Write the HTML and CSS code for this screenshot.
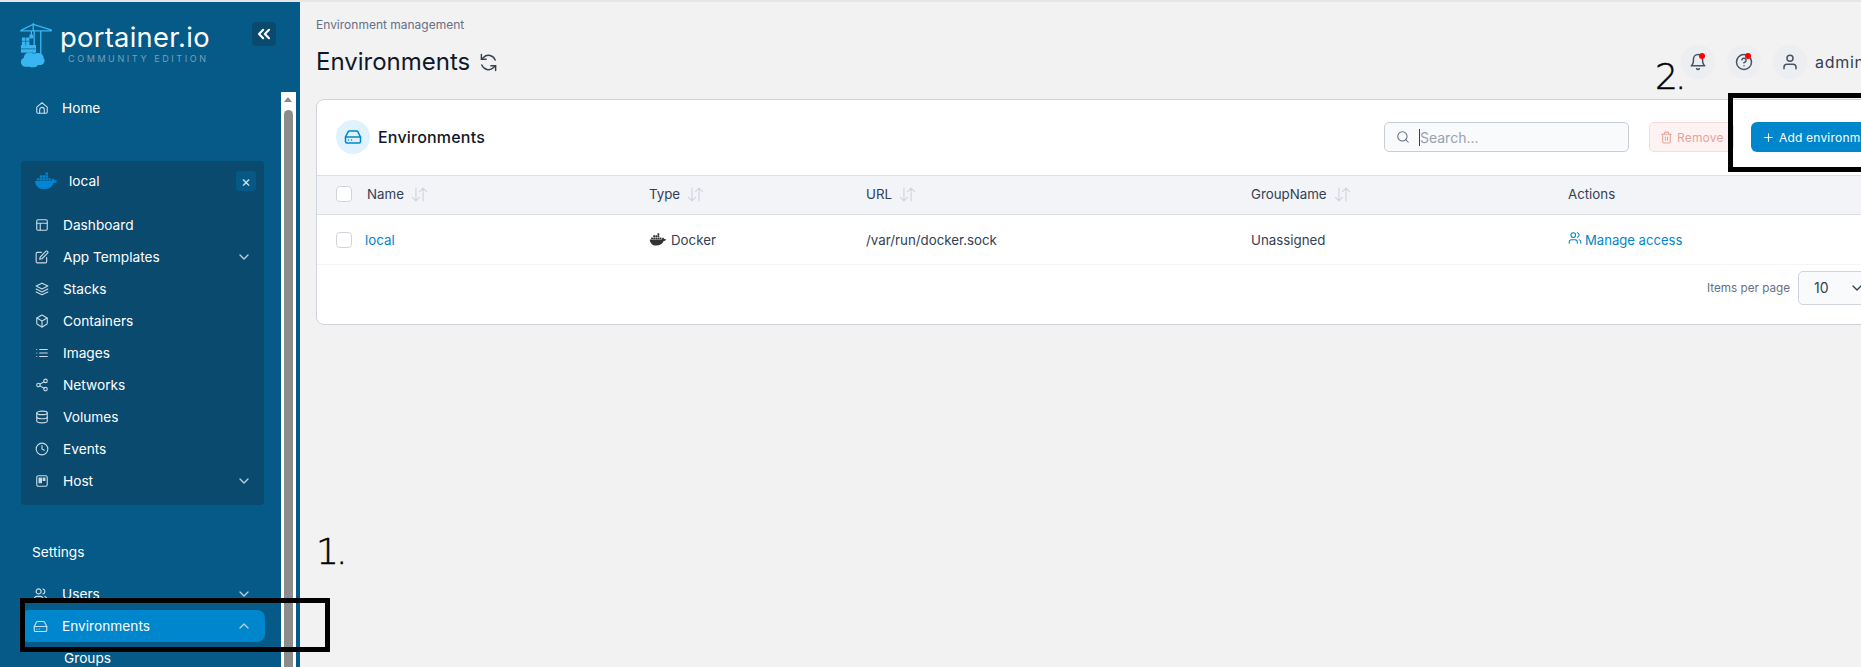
FILE: index.html
```html
<!DOCTYPE html>
<html lang="en">
<head>
<meta charset="utf-8">
<title>Environments | Portainer</title>
<link rel="stylesheet" href="styles.css">
</head>
<body>
<svg class="defs" width="0" height="0" aria-hidden="true">
  <symbol id="i-home" viewBox="0 0 24 24"><path d="M3 10.500 12 3l9 7.500V19a2 2 0 0 1-2 2H5a2 2 0 0 1-2-2z"/><path d="M8 21v-6a4 4 0 0 1 8 0v6"/></symbol>
  <symbol id="i-layout" viewBox="0 0 24 24"><rect x="3" y="3" width="18" height="18" rx="2"/><path d="M3 9h18M9 21V9"/></symbol>
  <symbol id="i-edit" viewBox="0 0 24 24"><path d="M11 4H4a2 2 0 0 0-2 2v14a2 2 0 0 0 2 2h14a2 2 0 0 0 2-2v-7"/><path d="M18.500 2.500a2.121 2.121 0 0 1 3 3L12 15l-4 1 1-4z"/></symbol>
  <symbol id="i-layers" viewBox="0 0 24 24"><path d="M12 2 2 7l10 5 10-5z"/><path d="m2 17 10 5 10-5M2 12l10 5 10-5"/></symbol>
  <symbol id="i-box" viewBox="0 0 24 24"><path d="M21 16V8a2 2 0 0 0-1-1.730l-7-4a2 2 0 0 0-2 0l-7 4A2 2 0 0 0 3 8v8a2 2 0 0 0 1 1.730l7 4a2 2 0 0 0 2 0l7-4A2 2 0 0 0 21 16z"/><path d="M3.270 6.960 12 12.010l8.730-5.050M12 22.080V12"/></symbol>
  <symbol id="i-list" viewBox="0 0 24 24"><path d="M8 6h13M8 12h13M8 18h13M3 6h.01M3 12h.01M3 18h.01"/></symbol>
  <symbol id="i-share" viewBox="0 0 24 24"><circle cx="18" cy="5" r="3"/><circle cx="6" cy="12" r="3"/><circle cx="18" cy="19" r="3"/><path d="m8.590 13.510 6.830 3.980M15.410 6.510l-6.820 3.980"/></symbol>
  <symbol id="i-db" viewBox="0 0 24 24"><ellipse cx="12" cy="5" rx="9" ry="3"/><path d="M21 12c0 1.660-4 3-9 3s-9-1.340-9-3"/><path d="M3 5v14c0 1.660 4 3 9 3s9-1.340 9-3V5"/></symbol>
  <symbol id="i-clock" viewBox="0 0 24 24"><circle cx="12" cy="12" r="10"/><path d="M12 6v6l4 2"/></symbol>
  <symbol id="i-host" viewBox="0 0 24 24"><rect x="3" y="3" width="18" height="18" rx="3"/><rect x="7" y="7" width="4" height="8" fill="currentColor"/><rect x="14" y="7" width="3" height="4" fill="currentColor"/></symbol>
  <symbol id="i-users" viewBox="0 0 24 24"><path d="M16 21v-2a4 4 0 0 0-4-4H6a4 4 0 0 0-4 4v2"/><circle cx="9" cy="7" r="4"/><path d="M22 21v-2a4 4 0 0 0-3-3.870M16 3.130a4 4 0 0 1 0 7.750"/></symbol>
  <symbol id="i-drive" viewBox="0 0 24 24"><path d="M22 12H2"/><path d="M5.450 5.110 2 12v6a2 2 0 0 0 2 2h16a2 2 0 0 0 2-2v-6l-3.450-6.890A2 2 0 0 0 16.760 4H7.240a2 2 0 0 0-1.790 1.110z"/><path d="M6 16h.01M10 16h.01"/></symbol>
  <symbol id="i-down" viewBox="0 0 24 24"><path d="m6 9 6 6 6-6"/></symbol>
  <symbol id="i-up" viewBox="0 0 24 24"><path d="m6 15 6-6 6 6"/></symbol>
  <symbol id="i-sort" viewBox="0 0 24 24"><path d="M7 3v18M2 16l5 5 5-5M17 21V3M12 8l5-5 5 5"/></symbol>
  <symbol id="i-whale" viewBox="0 0 24 18"><path d="M1 9h17c.3-1.500 1-2.300 2-2.800.8.600 1.200 1.300 1.300 2.100 1 0 1.900.1 2.700.6-.7 1.500-1.900 2.100-3.300 2.200C19 15 15.500 17.500 10 17.500c-5 0-8.500-3-9-8.500z"/><path d="M3 6h2.500v2.500H3zM6 6h2.500v2.500H6zM9 6h2.500v2.500H9zM12 6h2.500v2.500H12zM15 6h2.500v2.500H15zM6 3h2.500v2.500H6zM9 3h2.500v2.500H9zM12 3h2.500v2.500H12zM12 0h2.500v2.500H12z"/></symbol>
</svg>

<aside class="sidebar">
  <div class="brand">
    <svg class="logo" viewBox="0 0 36 48" aria-hidden="true">
      <g class="logo-crane">
        <path d="M0 8h33M14 0v8M14 1 2 7M14 1l19 6M15 8v26M22 8v26M12 8v6"/>
      </g>
      <g class="logo-fill">
        <rect x="2" y="15" width="8" height="8"/>
        <rect x="1" y="23" width="16" height="8"/>
        <rect x="10" y="12" width="4" height="4"/>
        <path d="M6 46c-3 0-5-2-5-5 0-2 1-4 3-4 0-3 2-6 6-6 2 0 4 1 5 2 2-2 5-2 7-1 2 1 3 3 3 5 2 2 1 7-3 7-1 0-2 0-3 0-2 3-7 3-9 2z"/>
      </g>
      <path class="logo-grid" d="M2 19h8M6 15v8M1 27h15"/>
    </svg>
    <div class="brand-text">
      <div class="brand-name">portainer.io</div>
      <div class="brand-sub">COMMUNITY EDITION</div>
    </div>
    <button class="collapse" aria-label="Collapse">
      <svg class="chev-double" viewBox="0 0 24 24"><path d="m11 17-5-5 5-5M18 17l-5-5 5-5"/></svg>
    </button>
  </div>
  <div class="side-body">
    <nav class="nav">
      <a class="item home"><svg class="ic"><use href="#i-home"/></svg><span>Home</span></a>
      <section class="env-box">
        <div class="env-head">
          <svg class="whale"><use href="#i-whale"/></svg>
          <span class="env-name">local</span>
          <button class="env-close" aria-label="Close">×</button>
        </div>
        <a class="item"><svg class="ic"><use href="#i-layout"/></svg><span>Dashboard</span></a>
        <a class="item"><svg class="ic"><use href="#i-edit"/></svg><span>App Templates</span><svg class="chev"><use href="#i-down"/></svg></a>
        <a class="item"><svg class="ic"><use href="#i-layers"/></svg><span>Stacks</span></a>
        <a class="item"><svg class="ic"><use href="#i-box"/></svg><span>Containers</span></a>
        <a class="item"><svg class="ic"><use href="#i-list"/></svg><span>Images</span></a>
        <a class="item"><svg class="ic"><use href="#i-share"/></svg><span>Networks</span></a>
        <a class="item"><svg class="ic"><use href="#i-db"/></svg><span>Volumes</span></a>
        <a class="item"><svg class="ic"><use href="#i-clock"/></svg><span>Events</span></a>
        <a class="item"><svg class="ic"><use href="#i-host"/></svg><span>Host</span><svg class="chev"><use href="#i-down"/></svg></a>
      </section>
      <div class="nav-title">Settings</div>
      <a class="item top"><svg class="ic"><use href="#i-users"/></svg><span>Users</span><svg class="chev"><use href="#i-down"/></svg></a>
      <a class="item top active"><svg class="ic"><use href="#i-drive"/></svg><span>Environments</span><svg class="chev"><use href="#i-up"/></svg></a>
      <a class="sub">Groups</a>
    </nav>
    <div class="scrollbar"><div class="scroll-up"></div><div class="scroll-thumb"></div></div>
  </div>
</aside>

<main class="main">
  <header class="topbar">
    <div>
      <div class="crumb">Environment management</div>
      <h1 class="title">Environments <svg class="refresh" viewBox="0 0 24 24"><path d="M3 2v6h6M21 22v-6h-6"/><path d="M20.500 9A9 9 0 0 0 5.600 5.600L3 8M3.500 15a9 9 0 0 0 14.900 3.400L21 16"/></svg></h1>
    </div>
    <div class="user">
      <div class="round"><svg class="ic-top" viewBox="0 0 24 24"><path d="M18 8a6 6 0 0 0-12 0c0 7-3 9-3 9h18s-3-2-3-9M13.700 21a2 2 0 0 1-3.400 0"/></svg><i class="dot"></i></div>
      <div class="round"><svg class="ic-top" viewBox="0 0 24 24"><circle cx="12" cy="12" r="10"/><path d="M9.100 9a3 3 0 0 1 5.800 1c0 2-3 3-3 3M12 17h.01"/></svg><i class="dot"></i></div>
      <div class="round"><svg class="ic-top" viewBox="0 0 24 24"><path d="M20 21v-2a4 4 0 0 0-4-4H8a4 4 0 0 0-4 4v2"/><circle cx="12" cy="7" r="4"/></svg></div>
      <span class="admin">admin</span>
    </div>
  </header>

  <section class="card">
    <div class="card-head">
      <div class="badge"><svg class="ic-badge"><use href="#i-drive"/></svg></div>
      <h2 class="card-title">Environments</h2>
      <div class="search">
        <svg class="ic-search" viewBox="0 0 24 24"><circle cx="11" cy="11" r="8"/><path d="m21 21-4.350-4.350"/></svg>
        <i class="caret"></i><span>Search...</span>
      </div>
      <button class="btn-remove"><svg class="ic-btn" viewBox="0 0 24 24"><path d="M3 6h18M19 6v14a2 2 0 0 1-2 2H7a2 2 0 0 1-2-2V6M8 6V4a2 2 0 0 1 2-2h4a2 2 0 0 1 2 2v2M10 11v6M14 11v6"/></svg>Remove</button>
      <button class="btn-add"><svg class="ic-btn" viewBox="0 0 24 24"><path d="M12 5v14M5 12h14"/></svg>Add environment</button>
    </div>
    <div class="row row-head">
      <i class="check"></i>
      <div class="cell">Name <svg class="sort"><use href="#i-sort"/></svg></div>
      <div class="cell">Type <svg class="sort"><use href="#i-sort"/></svg></div>
      <div class="cell">URL <svg class="sort"><use href="#i-sort"/></svg></div>
      <div class="cell">GroupName <svg class="sort"><use href="#i-sort"/></svg></div>
      <div class="cell">Actions</div>
    </div>
    <div class="row row-body">
      <i class="check"></i>
      <a class="cell link name-link">local</a>
      <div class="cell"><svg class="whale-dark"><use href="#i-whale"/></svg>Docker</div>
      <div class="cell">/var/run/docker.sock</div>
      <div class="cell">Unassigned</div>
      <a class="cell link access"><svg class="ic-access"><use href="#i-users"/></svg>Manage access</a>
    </div>
    <div class="card-foot">
      <span class="per-page">Items per page</span>
      <div class="select">10<svg class="chev-select"><use href="#i-down"/></svg></div>
    </div>
  </section>
</main>

<div class="mark mark-1"></div>
<div class="mark mark-2"></div>
<div class="num num-1">1.</div>
<div class="num num-2">2.</div>
</body>
</html>
```
FILE: styles.css
```css
* { box-sizing: border-box; }
html, body { margin: 0; height: 100%; }
body {
  display: flex;
  width: 1861px;
  height: 667px;
  overflow: hidden;
  position: relative;
  background: #f2f2f3;
  border-top: 2px solid #e6e6e6;
  font-family: Inter, "Liberation Sans", sans-serif;
  font-size: 13.700px;
  color: #344054;
}
.defs { position: absolute; }
svg { fill: none; stroke: currentColor; stroke-width: 2; stroke-linecap: round; stroke-linejoin: round; flex: none; }
button { font: inherit; border: 0; }

/* sidebar */
.sidebar {
  flex: none;
  width: 300px;
  height: 665px;
  background: #055a87;
  color: #fff;
  overflow: hidden;
}
.brand {
  display: flex;
  height: 90px;
  padding: 20px 24px 0 20px;
  align-items: flex-start;
}
.logo { width: 34px; height: 48px; color: #38b6f1; }
.logo-crane { stroke-width: 1.400; }
.logo-fill { fill: #38b6f1; stroke: none; }
.logo-grid { stroke: #055a87; stroke-width: .7; }
.brand-text { margin-left: 6px; width: 192px; }
.brand-name { font-size: 27.300px; line-height: 30px; margin-top: 1px; letter-spacing: .3px; }
.brand-sub { font-size: 9px; line-height: 11px; letter-spacing: 2.600px; color: #7d9db5; margin-left: 8px; }
.collapse {
  width: 24px; height: 24px; padding: 2px;
  background: #0b4a6f; border-radius: 4px; color: #fff; display: flex;
}
.chev-double { width: 20px; height: 20px; stroke-width: 2.500; }
.side-body { display: flex; height: 575px; }
.nav { width: 281px; flex: none; padding: 0 17px 0 21px; }
.scrollbar { width: 15px; background: #fff; padding: 0 3px; }
.scroll-up { height: 18px; position: relative; }
.scroll-up::before {
  content: ""; position: absolute; left: 0; top: 5px;
  border: 4.500px solid transparent; border-top: 0; border-bottom: 5px solid #8c8c8c;
}
.scroll-thumb { height: 560px; background: #8c8c8c; border-radius: 5px 5px 0 0; }

.item {
  display: flex; align-items: center; height: 32px;
  padding: 0 12px 0 14px; gap: 14px; color: #fff; font-size: 13.700px;
}
.item span { flex: 1; }
.ic { width: 14px; height: 14px; color: #c9dbe6; stroke-width: 1.900; }
.chev { width: 16px; height: 16px; color: #b9cfdd; }
.home { gap: 13px; margin-bottom: 37px; }
.env-box { background: #0b4a6f; border-radius: 4px; padding-bottom: 8px; margin-bottom: 35px; }
.env-head { display: flex; align-items: center; height: 40px; padding: 0 8px 0 13px; margin-bottom: 8px; }
.whale { width: 23px; height: 18px; color: #0086d4; fill: currentColor; stroke: none; }
.env-name { flex: 1; margin-left: 12px; }
.env-close {
  width: 20px; height: 20px; padding: 0; background: #075985; color: #d4e3ec;
  border-radius: 3px; font-size: 15px; line-height: 19px; text-align: center;
}
.nav-title { height: 24px; line-height: 24px; padding-left: 11px; margin-bottom: 14px; }
.item.top { margin: 0 -1px 0 0; padding: 0 13px 0 12px; gap: 14px; }
.item.top .ic { width: 15px; height: 15px; }
.active { background: #0086cc; border-radius: 8px; }
.sub { display: block; height: 32px; line-height: 32px; padding-left: 43px; }

/* main */
.main { flex: none; width: 1623px; padding: 0 16px; }
.topbar { display: flex; justify-content: space-between; height: 97px; padding-top: 14px; }
.crumb { font-size: 12px; line-height: 18px; color: #667085; }
.title { margin: 12px 0 0; font-size: 24px; font-weight: 400; line-height: 32px; color: #101828; display: flex; align-items: center; gap: 9px; }
.refresh { width: 19px; height: 19px; color: #344054; stroke-width: 1.800; }
.user { display: flex; align-items: flex-start; gap: 12px; padding: 29px 0 0; width: 226px; }
.round {
  width: 34px; height: 34px; border-radius: 50%; background: #eceef2;
  display: flex; align-items: center; justify-content: center; position: relative; color: #475467;
}
.ic-top { width: 18px; height: 18px; }
.dot { position: absolute; top: 8px; right: 10px; width: 6px; height: 6px; border-radius: 50%; background: #f00; }
.admin { font-size: 16px; line-height: 34px; letter-spacing: .7px; color: #344054; margin-left: -4px; }

.card {
  background: #fff; border: 1px solid #d0d5dd; border-radius: 8px;
  height: 226px; overflow: hidden;
}
.card-head { display: flex; align-items: center; height: 75px; padding: 0 15px 1px 19px; }
.badge {
  width: 34px; height: 34px; border-radius: 50%; background: #e0f2fe; color: #0086c9;
  display: flex; align-items: center; justify-content: center;
}
.ic-badge { width: 18px; height: 18px; }
.card-title { margin: 0 0 0 8px; font-size: 16px; font-weight: 500; color: #101828; flex: 1; letter-spacing: .2px; }
.search {
  display: flex; align-items: center; width: 245px; height: 30px;
  background: #f9fafb; border: 1px solid #c9cdd4; border-radius: 5px; padding-left: 11px;
  color: #98a2b3; font-size: 14px; margin-right: 20px;
}
.ic-search { width: 14px; height: 14px; color: #667085; stroke-width: 1.800; }
.caret { width: 1px; height: 17px; background: #344054; margin: 0 0 0 9px; }
.btn-remove {
  display: flex; align-items: center; gap: 4px; height: 30px; padding: 0 0 0 10px;
  background: #fef3f2; border: 1px solid #fdd9d6; border-radius: 5px; color: #e8a39b; font-size: 12px; letter-spacing: .2px;
  margin-right: 17px; width: 85px;
}
.ic-btn { width: 13px; height: 13px; }
.btn-add {
  display: flex; align-items: center; gap: 4px; height: 30px; padding: 0 12px 0 11px;
  background: #0086cc; border-radius: 6px; color: #fff; font-size: 12px; letter-spacing: .2px; white-space: nowrap;
}
.row { display: grid; grid-template-columns: 31px 282px 217px 385px 317px 1fr; align-items: center; padding-left: 19px; }
.row-head { height: 40px; padding-bottom: 2px; background: #f2f4f7; border-top: 1px solid #dcdfe5; border-bottom: 1px solid #dcdfe5; color: #344054; font-size: 13.300px; }
.row-body { height: 50px; border-bottom: 1px solid #f2f4f7; font-size: 13.300px; color: #344054; }
.check { display: block; width: 16px; height: 16px; background: #fff; border: 1px solid #d0d5dd; border-radius: 4px; }
.cell { display: flex; align-items: center; white-space: nowrap; }
.sort { width: 17px; height: 17px; color: #d0d5dd; margin-left: 7px; stroke-width: 1.600; }
.link { color: #0086c9; }
.name-link { margin-left: -2px; }
.whale-dark { width: 17px; height: 13px; color: #333; margin-right: 5px; fill: currentColor; stroke: none; }
.access { font-size: 13.100px; }
.ic-access { width: 14px; height: 14px; margin-right: 3px; margin-top: -3px; stroke-width: 1.800; }
.card-foot { display: flex; align-items: center; justify-content: flex-end; height: 59px; padding: 0 22px 14px 0; }
.per-page { font-size: 11.700px; color: #667085; margin-right: 8px; }
.select {
  display: flex; align-items: center; width: 86px; height: 34px; padding-left: 15px;
  background: #f9fafb; border: 1px solid #d0d5dd; border-radius: 5px; color: #344054; font-size: 14px; gap: 20px;
}
.chev-select { width: 16px; height: 16px; color: #344054; }

/* annotations lying over the screenshot */
.mark { position: absolute; border: 5px solid #000; }
.mark-1 { left: 20px; top: 596px; width: 310px; height: 54px; }
.mark-2 { left: 1728px; top: 91px; width: 200px; height: 79px; }
.num { position: absolute; font-family: "DejaVu Sans", sans-serif; font-weight: 200; font-size: 36px; line-height: 40px; color: #000; letter-spacing: -3px; -webkit-text-stroke: .5px #000; }
.num-1 { left: 316px; top: 530px; }
.num-2 { left: 1655px; top: 55px; }
```
